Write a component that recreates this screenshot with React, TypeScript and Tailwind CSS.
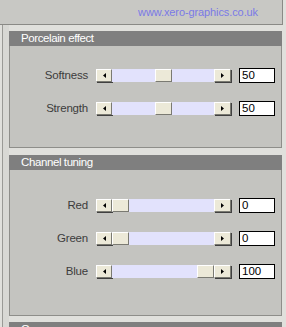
import React from 'react';

type SliderRowProps = {
  label: string;
  value: number;
};

const ArrowButton: React.FC<{ dir: 'left' | 'right'; className?: string }> = ({ dir, className }) => (
  <div
    className={`flex h-[13px] shrink-0 items-center justify-center border border-t-white border-l-white border-r-[#7a7a72] border-b-[#7a7a72] bg-[#ece9d8] shadow-[1px_1px_0_#404040] ${className ?? ''}`}
  >
    <svg width="3" height="5" viewBox="0 0 3 5">
      {dir === 'left' ? <polygon points="3,0 3,5 0,2.5" fill="#000" /> : <polygon points="0,0 0,5 3,2.5" fill="#000" />}
    </svg>
  </div>
);

const SliderRow: React.FC<SliderRowProps> = ({ label, value }) => {
  // track is 102px, thumb is 17px -> 85px of travel
  const left = Math.round((value / 100) * 85);

  return (
    <div className="flex h-[15px] shrink-0 items-center">
      <div className="w-[79px] pr-[1px] text-right text-[11.5px] leading-none tracking-[-0.2px] text-[#3c3c3c]">{label}</div>
      <div className="ml-[7px] flex w-[135px] items-center">
        <ArrowButton dir="left" className="w-[16px]" />
        <div className="relative h-[13px] w-[102px] shrink-0 bg-[#e2e2fc]">
          <div
            className="absolute top-0 h-[13px] w-[17px] border border-t-white border-l-white border-r-[#7a7a72] border-b-[#7a7a72] bg-[#ece9d8]"
            style={{ left }}
          />
        </div>
        <ArrowButton dir="right" className="w-[17px]" />
      </div>
      <div className="ml-[8px] flex h-[15px] w-[36px] items-center border border-black bg-white pl-[2px] text-[11.5px] leading-none text-black">
        {value}
      </div>
    </div>
  );
};

const PanelTitle: React.FC<{ title: string }> = ({ title }) => (
  <div className="flex h-[15px] shrink-0 items-center bg-[#7f7f7f] pl-[12px] pt-[1px] text-[11.5px] leading-none tracking-[-0.4px] text-white">
    {title}
  </div>
);

const App: React.FC = () => {
  return (
    <div
      className="h-[327px] w-[286px] overflow-hidden bg-[#e0e0dc]"
      style={{ fontFamily: '"Liberation Sans", Arial, sans-serif' }}
    >
      <div className="flex h-[25px] w-[283px] items-center justify-end border-b border-r border-[#8a8a86] bg-[#c8c8c4] pr-[24px] pt-[1px] text-[11px] tracking-[-0.1px] text-[#7a7ae6]">
        www.xero-graphics.co.uk
      </div>
      <div className="flex">
        <div className="ml-[2px] w-[7px] shrink-0 border-l border-[#9a9a96] bg-[#d8d8d4]" />
        <div className="flex w-[273px] shrink-0 flex-col pt-[6px]">
          <PanelTitle title="Porcelain effect" />
          <div className="flex h-[102px] shrink-0 flex-col gap-[18px] border-x border-b border-[#8e8e8a] bg-[#c4c4c0] pt-[22px]">
            <SliderRow label="Softness" value={50} />
            <SliderRow label="Strength" value={50} />
          </div>
          <div className="h-[7px] shrink-0" />
          <PanelTitle title="Channel tuning" />
          <div className="flex h-[146px] shrink-0 flex-col gap-[18px] border-x border-b border-[#8e8e8a] bg-[#c4c4c0] pt-[28px]">
            <SliderRow label="Red" value={0} />
            <SliderRow label="Green" value={0} />
            <SliderRow label="Blue" value={100} />
          </div>
          <div className="h-[6px] shrink-0" />
          <PanelTitle title="Gamma curve" />
        </div>
      </div>
    </div>
  );
};

export default App;
